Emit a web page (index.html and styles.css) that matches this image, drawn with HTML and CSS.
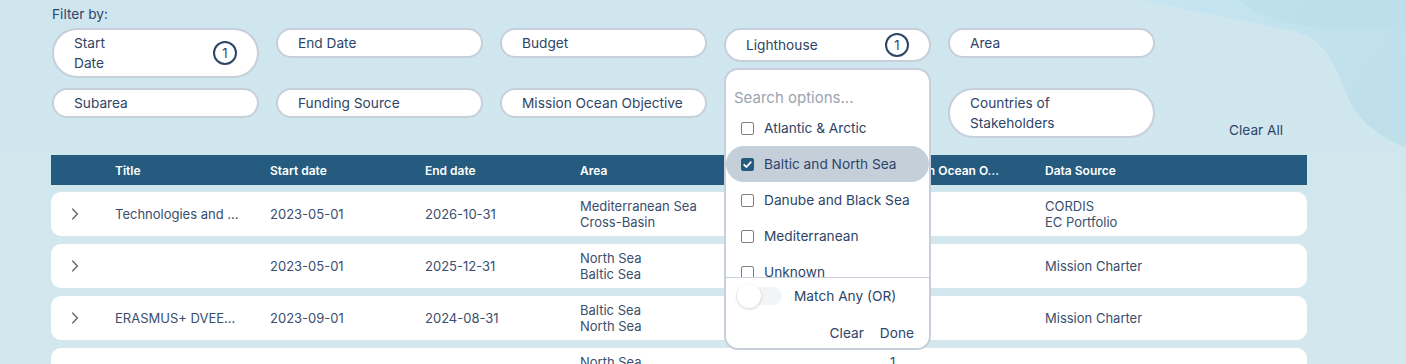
FILE: index.html
```html
<!DOCTYPE html>
<html lang="en">
<head>
<meta charset="utf-8">
<title>Projects</title>
<link rel="stylesheet" href="styles.css">
</head>
<body>
<svg class="bg-waves" viewBox="0 0 300 200" preserveAspectRatio="none" aria-hidden="true">
  <defs>
    <linearGradient id="wave1" x1="0" y1="0" x2="1" y2="0.4">
      <stop offset="0" stop-color="#c6e5f3"/>
      <stop offset="1" stop-color="#bfe0ea"/>
    </linearGradient>
  </defs>
  <path d="M34 0 C100 14 160 24 194 33 C228 44 236 88 246 106 C258 126 280 140 300 148 L300 0 Z" fill="url(#wave1)"/>
  <path d="M134 0 C150 15 180 26 230 29 C260 31 285 30 300 30 L300 0 Z" fill="#bcdeea" opacity="0.8"/>
</svg>

<div class="page">
  <div class="filter-label">Filter by:</div>

  <div class="filter-bar">
    <div class="filter-grid">
      <div class="pill-wrap">
        <button class="pill"><span class="pill-text">Start<br>Date</span><span class="badge">1</span></button>
      </div>
      <div class="pill-wrap">
        <button class="pill"><span class="pill-text">End Date</span></button>
      </div>
      <div class="pill-wrap">
        <button class="pill"><span class="pill-text">Budget</span></button>
      </div>
      <div class="pill-wrap">
        <button class="pill"><span class="pill-text">Lighthouse</span><span class="badge">1</span></button>
        <div class="dropdown">
          <div class="search"><input class="search-input" type="text" placeholder="Search options..."></div>
          <div class="options">
            <div class="option"><span class="checkbox"></span><span>Atlantic &amp; Arctic</span></div>
            <div class="option selected"><span class="checkbox checked"><svg viewBox="0 0 13 13" width="13" height="13"><path d="M3.2 6.8 L5.5 9 L9.8 4.2" fill="none" stroke="#fff" stroke-width="1.8" stroke-linecap="round" stroke-linejoin="round"/></svg></span><span>Baltic and North Sea</span></div>
            <div class="option"><span class="checkbox"></span><span>Danube and Black Sea</span></div>
            <div class="option"><span class="checkbox"></span><span>Mediterranean</span></div>
            <div class="option"><span class="checkbox"></span><span>Unknown</span></div>
          </div>
          <div class="dropdown-footer">
            <div class="match-row"><span class="toggle"></span><span class="match-label">Match Any (OR)</span></div>
            <div class="actions"><button class="link-btn">Clear</button><button class="link-btn">Done</button></div>
          </div>
        </div>
      </div>
      <div class="pill-wrap">
        <button class="pill"><span class="pill-text">Area</span></button>
      </div>
      <div class="pill-wrap">
        <button class="pill"><span class="pill-text">Subarea</span></button>
      </div>
      <div class="pill-wrap">
        <button class="pill"><span class="pill-text">Funding Source</span></button>
      </div>
      <div class="pill-wrap">
        <button class="pill"><span class="pill-text">Mission Ocean Objective</span></button>
      </div>
      <div class="pill-wrap">
        <button class="pill"><span class="pill-text">Data Source</span></button>
      </div>
      <div class="pill-wrap">
        <button class="pill"><span class="pill-text">Countries of<br>Stakeholders</span></button>
      </div>
    </div>
    <button class="clear-all">Clear All</button>
  </div>

  <div class="table">
    <div class="thead">
      <div></div>
      <div>Title</div>
      <div>Start date</div>
      <div>End date</div>
      <div>Area</div>
      <div>Lighthouse</div>
      <div>Mission Ocean O…</div>
      <div>Data Source</div>
    </div>
    <div class="tbody">
      <div class="trow">
        <div class="chev"><svg viewBox="0 0 8 12" width="8" height="12"><path d="M1.8 1.2 L6.4 6 L1.8 10.8" fill="none" stroke="#6b6f76" stroke-width="1.6" stroke-linecap="round" stroke-linejoin="round"/></svg></div>
        <div>Technologies and …</div>
        <div>2023-05-01</div>
        <div>2026-10-31</div>
        <div>Mediterranean Sea<br>Cross-Basin</div>
        <div>Mediterranean</div>
        <div>1</div>
        <div>CORDIS<br>EC Portfolio</div>
      </div>
      <div class="trow">
        <div class="chev"><svg viewBox="0 0 8 12" width="8" height="12"><path d="M1.8 1.2 L6.4 6 L1.8 10.8" fill="none" stroke="#6b6f76" stroke-width="1.6" stroke-linecap="round" stroke-linejoin="round"/></svg></div>
        <div></div>
        <div>2023-05-01</div>
        <div>2025-12-31</div>
        <div>North Sea<br>Baltic Sea</div>
        <div>Baltic</div>
        <div>2</div>
        <div>Mission Charter</div>
      </div>
      <div class="trow">
        <div class="chev"><svg viewBox="0 0 8 12" width="8" height="12"><path d="M1.8 1.2 L6.4 6 L1.8 10.8" fill="none" stroke="#6b6f76" stroke-width="1.6" stroke-linecap="round" stroke-linejoin="round"/></svg></div>
        <div>ERASMUS+ DVEE…</div>
        <div>2023-09-01</div>
        <div>2024-08-31</div>
        <div>Baltic Sea<br>North Sea</div>
        <div>Baltic</div>
        <div>3</div>
        <div>Mission Charter</div>
      </div>
      <div class="trow">
        <div class="chev"><svg viewBox="0 0 8 12" width="8" height="12"><path d="M1.8 1.2 L6.4 6 L1.8 10.8" fill="none" stroke="#6b6f76" stroke-width="1.6" stroke-linecap="round" stroke-linejoin="round"/></svg></div>
        <div>Blue Parks</div>
        <div>2023-01-01</div>
        <div>2026-12-31</div>
        <div>North Sea<br>Baltic Sea</div>
        <div>Baltic</div>
        <div>1<br>2</div>
        <div>Mission Charter</div>
      </div>
    </div>
  </div>
</div>
</body>
</html>
```

FILE: styles.css
```css
* {
  box-sizing: border-box;
}

html,
body {
  margin: 0;
  height: 100%;
}

body {
  position: relative;
  overflow: hidden;
  font-family: Inter, "Noto Sans", "Liberation Sans", sans-serif;
  color: #2e4567;
  background: linear-gradient(180deg, #cfe6ef 0%, #d3e8ed 100%);
}

.bg-waves {
  position: absolute;
  top: 0;
  right: 0;
  width: 300px;
  height: 200px;
  z-index: 0;
}

.page {
  position: relative;
  z-index: 1;
  padding: 6px 0 0 51px;
}

.filter-label {
  font-size: 13.7px;
  line-height: 16px;
  margin: 0 0 6px 1px;
}

.filter-bar {
  display: flex;
  align-items: flex-end;
}

.filter-grid {
  display: grid;
  grid-template-columns: repeat(5, 207px);
  column-gap: 17px;
  row-gap: 10px;
  align-items: start;
  margin-left: 1px;
}

.pill-wrap {
  position: relative;
}

.pill {
  display: flex;
  align-items: center;
  justify-content: space-between;
  width: 100%;
  margin: 0;
  padding: 3px 20px;
  background: #fff;
  border: 2px solid #c6cfda;
  border-radius: 26px;
  font-family: inherit;
  font-size: 13.7px;
  line-height: 20px;
  color: inherit;
  text-align: left;
}

.badge {
  display: flex;
  align-items: center;
  justify-content: center;
  width: 24px;
  height: 24px;
  border: 2px solid #2c4466;
  border-radius: 50%;
  font-size: 13px;
  line-height: 1;
  color: #2c4466;
}

.clear-all {
  margin-left: 74px;
  padding: 0;
  background: none;
  border: 0;
  font-family: inherit;
  font-size: 13.7px;
  line-height: 16px;
  color: #2e4567;
}

/* Dropdown */
.dropdown {
  position: absolute;
  top: calc(100% + 6px);
  left: 0;
  z-index: 5;
  display: flex;
  flex-direction: column;
  width: 207px;
  height: 282px;
  background: #fff;
  border: 2px solid #c6cfda;
  border-radius: 14px;
  overflow: hidden;
}

.search {
  padding: 14px 0 0 8px;
}

.search-input {
  display: block;
  width: 180px;
  height: 26px;
  padding: 0;
  border: 0;
  outline: none;
  background: transparent;
  font-family: inherit;
  font-size: 15px;
  color: #2e4567;
}

.search-input::placeholder {
  color: #9ba4b0;
}

.options {
  height: 167px;
  overflow: hidden;
}

.option {
  display: flex;
  align-items: center;
  gap: 10px;
  height: 36px;
  padding-left: 15px;
  border-radius: 18px;
  font-size: 13.7px;
}

.option.selected {
  background: #c4cfda;
}

.checkbox {
  display: flex;
  flex: none;
  width: 13px;
  height: 13px;
  border: 1px solid #7a7d82;
  border-radius: 2px;
  background: #fff;
}

.checkbox.checked {
  background: #245b7e;
  border-color: #245b7e;
}

.checkbox svg {
  margin: -1px;
}

.dropdown-footer {
  border-top: 1px solid #c6cfda;
}

.match-row {
  display: flex;
  align-items: center;
  height: 28px;
  margin-top: 4px;
  padding-left: 10px;
  font-size: 13.7px;
}

.toggle {
  position: relative;
  flex: none;
  width: 46px;
  height: 18px;
  border-radius: 9px;
  background: #f2f4f6;
}

.toggle::before {
  content: "";
  position: absolute;
  left: 1px;
  top: -3px;
  width: 24px;
  height: 24px;
  border-radius: 50%;
  background: #fff;
  box-shadow: 0 1px 3px rgba(0, 0, 0, 0.18);
}

.match-label {
  margin-left: 12px;
}

.actions {
  display: flex;
  justify-content: flex-end;
  gap: 16px;
  margin-top: 13px;
  padding-right: 15px;
}

.link-btn {
  padding: 0;
  background: none;
  border: 0;
  font-family: inherit;
  font-size: 13.7px;
  line-height: 20px;
  color: #2e4567;
}

/* Table */
.table {
  width: 1256px;
  margin-top: 17px;
}

.thead,
.trow {
  display: grid;
  grid-template-columns: 64px repeat(6, 155px) 1fr;
  align-items: center;
}

.thead {
  height: 30px;
  background: #245b7e;
  color: #fff;
  font-size: 12px;
  font-weight: 600;
}

.tbody {
  display: flex;
  flex-direction: column;
  gap: 8px;
  padding-top: 7px;
}

.trow {
  min-height: 44px;
  background: #fff;
  border-radius: 10px;
  font-size: 13px;
  line-height: 16px;
  color: #3a4e6d;
}

.chev {
  display: flex;
  padding-left: 20px;
}
```
